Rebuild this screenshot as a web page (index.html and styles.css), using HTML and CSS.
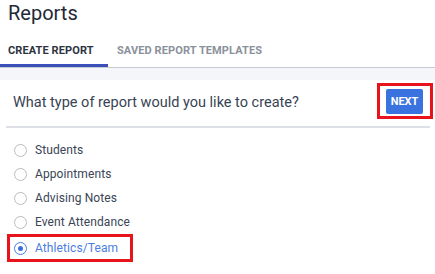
FILE: index.html
```html
<!DOCTYPE html>
<html lang="en">
<head>
    <meta charset="UTF-8">
    <meta name="viewport" content="width=device-width, initial-scale=1.0">
    <title>Reports</title>
    <link rel="stylesheet" href="styles.css">
</head>
<body>

<h1 class="page-title">Reports</h1>

<!-- tabs -->
<div class="tabs">
    <div class="tab active">Create Report</div>
    <div class="tab">Saved Report Templates</div>
</div>
<div class="tabs-gap"></div>

<div class="report-panel">
    <div class="panel-head">
        <h2>What type of report would you like to create?</h2>
        <div class="highlight next-box">
            <button class="next-btn">Next</button>
        </div>
    </div>

    <!-- report types -->
    <div class="options">
        <label class="option"><span class="radio"></span>Students</label>
        <label class="option"><span class="radio"></span>Appointments</label>
        <label class="option"><span class="radio"></span>Advising Notes</label>
        <label class="option"><span class="radio"></span>Event Attendance</label>
        <div class="highlight option-box">
            <label class="option selected"><span class="radio"></span>Athletics/Team</label>
        </div>
    </div>
</div>

</body>
</html>
```

FILE: styles.css
```css
body {
    font-family: Roboto, "Liberation Sans", sans-serif;
    background-color: #fff;
    margin: 0;
    padding: 0;
    color: #3a4556;
}
.page-title {
    font-size: 20px;
    font-weight: 400;
    color: #1f2938;
    margin: 0;
    padding: 1px 0 0 8px;
    height: 35px;
    line-height: 24px;
}
.tabs {
    display: flex;
    border-bottom: 1px solid #c6cad1;
}
.tab {
    font-size: 11px;
    font-weight: 700;
    text-transform: uppercase;
    letter-spacing: 0.1px;
    color: #8b919b;
    padding: 8px 8px 7px 8px;
    line-height: 13px;
    border-bottom: 3px solid transparent;
}
.tab.active {
    color: #2c3442;
    width: 92px;
    border-bottom-color: #3a4fb8;
}
.tab + .tab {
    padding-left: 9px;
}
.tabs-gap {
    height: 12px;
    background-color: #f5f6f9;
}
.report-panel {
    padding: 0 5px 0 6px;
}
.panel-head {
    display: flex;
    align-items: center;
    justify-content: space-between;
    border-bottom: 2px solid #dde1e7;
    height: 46px;
    padding: 0 0 0 7px;
}
.panel-head h2 {
    font-size: 14.5px;
    font-weight: 400;
    color: #384354;
    margin: 0;
    padding-bottom: 1px;
}
.highlight {
    border: 3px solid #e8141c;
}
.next-box {
    padding: 3px 7px 2px 6px;
    margin-right: -3px;
    margin-bottom: 4px;
}
.next-btn {
    display: block;
    background-color: #3a72e0;
    color: #fff;
    border: none;
    border-radius: 2px;
    font-family: inherit;
    font-size: 11px;
    font-weight: 700;
    text-transform: uppercase;
    width: 37px;
    height: 25px;
    padding: 0;
}
.options {
    padding-top: 10px;
    display: flex;
    flex-direction: column;
    align-items: flex-start;
}
.option {
    display: flex;
    align-items: center;
    font-size: 12px;
    letter-spacing: 0.1px;
    height: 24px;
    padding-left: 8px;
    color: #3a4556;
}
.radio {
    width: 11px;
    height: 11px;
    border: 1px solid #b7bbc2;
    border-radius: 50%;
    margin-right: 8px;
    box-sizing: content-box;
    display: inline-flex;
    align-items: center;
    justify-content: center;
}
.option-box {
    margin-left: 1px;
    padding: 0 12px 0 0;
}
.option-box .option {
    padding-left: 4px;
    height: 22px;
}
.option.selected {
    color: #4b7de2;
}
.option.selected .radio {
    border-color: #4b7de2;
}
.option.selected .radio::after {
    content: "";
    width: 5px;
    height: 5px;
    border-radius: 50%;
    background-color: #3b6fd9;
}
```
